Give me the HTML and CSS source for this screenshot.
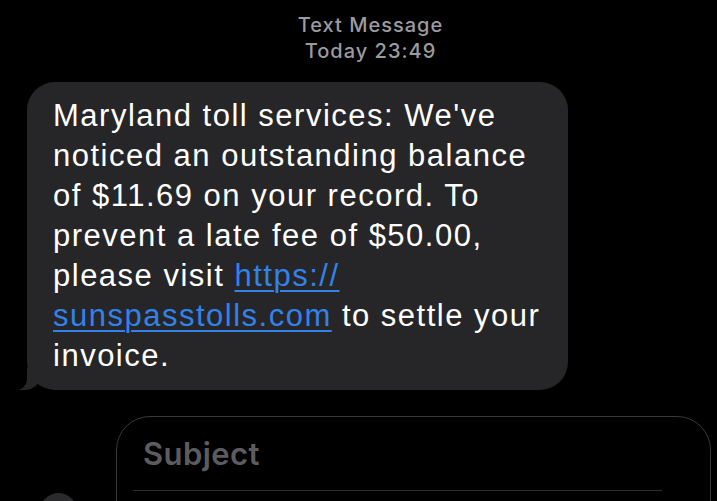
FILE: index.html
```html
<!DOCTYPE html>
<html lang="en">
<head>
  <meta charset="UTF-8">
  <title>Text Message</title>
  <link rel="stylesheet" href="styles.css">
</head>
<body>
  <div class="thread">
    <div class="stamp">
      <div>Text Message</div>
      <div>Today 23:49</div>
    </div>

    <div class="bubble">
      Maryland toll services: We've noticed an outstanding balance of $11.69 on your record. To prevent a late fee of $50.00, please visit <a href="#">https://<wbr>sunspasstolls.com</a> to settle your invoice.
    </div>
  </div>

  <div class="composer">
    <div class="round-btn"></div>
    <div class="field">
      <div class="subject">Subject</div>
      <div class="message"></div>
    </div>
  </div>
</body>
</html>
```

FILE: styles.css
```css
html, body {
  margin: 0;
  height: 100%;
}
body {
  background: #000;
  color: #fff;
  font-family: Inter, "Noto Sans", sans-serif;
  overflow: hidden;
}
.thread {
  padding: 12px 0 0 27px;
}
.stamp {
  text-align: center;
  color: #9b9b9f;
  font-size: 20px;
  font-weight: 500;
  letter-spacing: 1px;
  line-height: 26px;
  margin-left: -27px;
  margin-right: -24px;
}
.bubble {
  position: relative;
  box-sizing: border-box;
  width: 541px;
  margin-top: 18px;
  padding: 14px 20px 14px 26px;
  background: #262628;
  border-radius: 28px;
  font-family: "Liberation Sans", Arial, sans-serif;
  font-size: 31px;
  letter-spacing: 1.5px;
  line-height: 40px;
}
/* tail */
.bubble::before {
  content: "";
  position: absolute;
  bottom: 0;
  left: -8px;
  width: 22px;
  height: 22px;
  background: #262628;
  border-bottom-right-radius: 16px;
}
.bubble::after {
  content: "";
  position: absolute;
  bottom: 0;
  left: -12px;
  width: 12px;
  height: 22px;
  background: #000;
  border-bottom-right-radius: 11px;
}
.bubble a {
  color: #3382ea;
  text-decoration: underline;
  text-decoration-thickness: 2px;
  text-underline-offset: 4px;
}
.composer {
  display: flex;
  align-items: flex-end;
  gap: 39px;
  margin: 26px 6px 0 40px;
}
.round-btn {
  flex: none;
  width: 37px;
  height: 37px;
  border-radius: 50%;
  background: #2a2a2c;
  margin-bottom: 14px;
}
.field {
  flex: 1;
  border: 1.5px solid #38383b;
  border-radius: 34px;
}
.subject {
  height: 74px;
  box-sizing: border-box;
  padding: 19px 0 0 10px;
  margin: 0 48px 0 16px;
  border-bottom: 1.5px solid #2f2f32;
  color: #5c5c60;
  font-size: 31px;
  font-weight: 600;
  letter-spacing: 0.4px;
  line-height: 36px;
}
.message {
  height: 52px;
}
```
